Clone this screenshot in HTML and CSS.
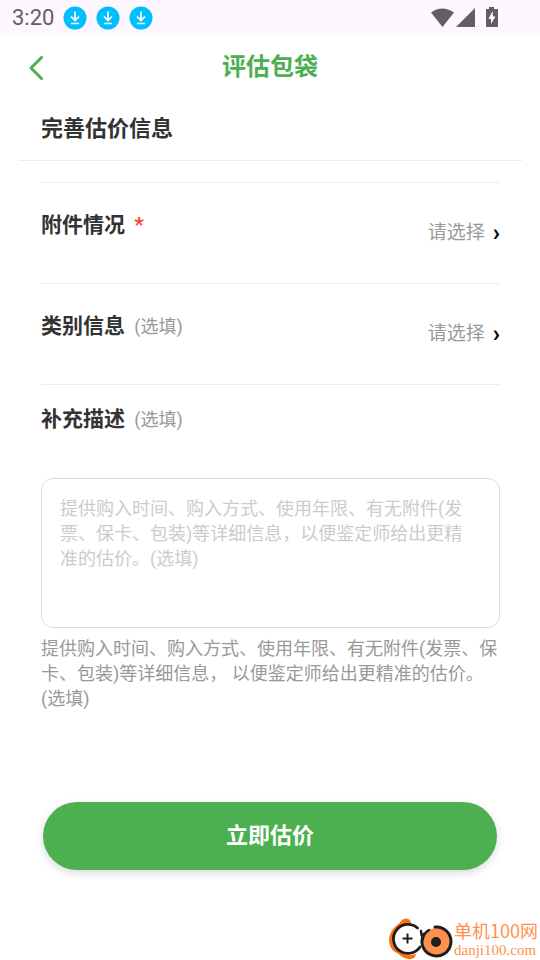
FILE: index.html
```html
<!DOCTYPE html>
<html lang="zh-CN">
<head>
<meta charset="utf-8">
<meta name="viewport" content="width=device-width, initial-scale=1">
<title>评估包袋</title>
<link rel="stylesheet" href="styles.css">
</head>
<body>
<svg class="sprite" aria-hidden="true">
  <symbol id="download" viewBox="0 0 24 24">
    <circle cx="12" cy="12" r="11.500" fill="#00bfff"/>
    <path d="M12 5.500v9M8 10.500l4 4 4-4M8 17.500h8" fill="none" stroke="#fff" stroke-width="1.700"/>
  </symbol>
</svg>
<div class="status">
  <span class="clock">3:20</span>
  <svg class="notice" aria-hidden="true"><use href="#download"/></svg>
  <svg class="notice" aria-hidden="true"><use href="#download"/></svg>
  <svg class="notice" aria-hidden="true"><use href="#download"/></svg>
  <svg class="system" viewBox="0 0 68 22" aria-hidden="true">
    <path d="M0 5.500Q11 -2.500 23 5.500L11.500 20Z"/>
    <path d="M25 20L44 1v19Z"/>
    <path fill-rule="evenodd" d="M58 0h5v2h3q1 0 1 1v16q0 1-1 1H56q-1 0-1-1V3q0-1 1-1h2ZM61.500 4L57.500 12h2.500v5L64.500 9.500h-2.500Z"/>
  </svg>
</div>
<header class="topbar">
  <button class="back" type="button" aria-label="返回">
    <svg viewBox="0 0 14 24" aria-hidden="true"><path d="M12.500 1.500L2 12l10.500 10.500"/></svg>
  </button>
  <h1>评估包袋</h1>
</header>
<main>
  <h2>完善估价信息</h2>
  <form>
    <div class="row">
      <span class="label" id="parts">附件情况 <span class="required">*</span></span>
      <button class="pick" type="button" aria-describedby="parts">请选择<span class="arrow">›</span></button>
    </div>
    <div class="row">
      <span class="label" id="kind">类别信息 <span class="optional">(选填)</span></span>
      <button class="pick" type="button" aria-describedby="kind">请选择<span class="arrow">›</span></button>
    </div>
    <div class="describe">
      <label class="label" for="detail">补充描述 <span class="optional">(选填)</span></label>
      <textarea id="detail" placeholder="提供购入时间、购入方式、使用年限、有无附件(发票、保卡、包装)等详细信息，以便鉴定师给出更精准的估价。(选填)"></textarea>
      <p>提供购入时间、购入方式、使用年限、有无附件(发票、保卡、包装)等详细信息， 以便鉴定师给出更精准的估价。(选填)</p>
    </div>
    <button class="submit" type="submit">立即估价</button>
  </form>
</main>
<aside class="mark">
  <svg viewBox="0 0 64 42" aria-hidden="true">
    <path d="M21 2Q17 -1 13 2Q11 5 7 8Q1 13 0 21Q0 30 6 34Q9 35 12 38Q19 43 25 40Q27 38 27 36Q18 39 11 34Q3 28 4 20Q5 9 15 6Q19 6 22 5Z" fill="#ff6f0f"/>
    <circle cx="19" cy="21" r="14.500" fill="#fff"/>
    <path d="M28.500 10A14.500 14.500 0 1 0 31 29" fill="none" stroke="#211c1d" stroke-width="2.800" stroke-linecap="round"/>
    <path d="M18.500 15.500v10M13.500 20.500h10" stroke="#211c1d" stroke-width="2"/>
    <circle cx="47.500" cy="23.500" r="13.500" fill="#ff914d"/>
    <path d="M46 9A14.500 14.500 0 1 1 35 16" fill="none" stroke="#211c1d" stroke-width="3" stroke-linecap="round"/>
    <path d="M32 13q0 4 2 7q1-5 6-8" fill="none" stroke="#211c1d" stroke-width="2.500" stroke-linecap="round"/>
    <circle cx="47" cy="24" r="5" fill="#211c1d"/>
  </svg>
  <div class="site"><b>单机100网</b><span>danji100.com</span></div>
</aside>
</body>
</html>
```
FILE: styles.css
```css
* {
  box-sizing: border-box;
}

body {
  margin: 0;
  min-height: 100vh;
  display: flex;
  flex-direction: column;
  background: #fff;
  color: #333;
  font-family: Roboto, "Noto Sans CJK SC", sans-serif;
}

button,
textarea {
  font-family: inherit;
}

h1,
h2,
p {
  margin: 0;
}

.sprite {
  position: absolute;
  width: 0;
  height: 0;
}

.status {
  display: flex;
  align-items: center;
  gap: 9px;
  height: 36px;
  padding: 0 41px 0 12px;
  background: #fef7ff;
}

.clock {
  color: #625f64;
  font-size: 22px;
  line-height: 36px;
}

.notice {
  width: 24px;
  height: 24px;
}

.system {
  width: 68px;
  height: 22px;
  margin-left: auto;
  fill: #625f64;
}

.topbar {
  display: grid;
  grid-template-columns: 48px 1fr 48px;
  align-items: center;
  height: 62px;
  padding: 0 12px;
}

.topbar h1 {
  color: #4caf50;
  font-size: 24px;
  font-weight: 700;
  line-height: 36px;
  text-align: center;
}

.back {
  height: 48px;
  padding: 2px 0 0;
  border: 0;
  background: none;
}

.back svg {
  display: block;
  width: 14px;
  height: 24px;
  margin: 0 auto;
  fill: none;
  stroke: #4caf50;
  stroke-width: 3;
  stroke-linecap: round;
  stroke-linejoin: round;
}

main {
  padding: 0 18px;
}

h2 {
  padding: 14px 23px;
  border-bottom: 1px solid #ececec;
  font-size: 22px;
  font-weight: 700;
  line-height: 34px;
}

form {
  padding: 21px 22px 0 23px;
}

.row {
  display: flex;
  justify-content: space-between;
  height: 101px;
  padding-top: 26px;
  border-top: 1px solid #ececec;
}

.label {
  font-size: 21px;
  font-weight: 700;
  line-height: 32px;
}

.required {
  margin-left: 4px;
  color: #f44336;
}

.optional {
  margin-left: 4px;
  color: #999;
  font-size: 18px;
  font-weight: 400;
}

.pick {
  display: flex;
  gap: 8px;
  align-self: flex-start;
  padding: 8px 0;
  border: 0;
  background: none;
  color: #999;
  font-size: 19px;
  line-height: 32px;
}

.arrow {
  color: #000;
  font-size: 24px;
  font-weight: 700;
}

.describe {
  padding-top: 18px;
  border-top: 1px solid #ececec;
}

.describe .label {
  display: block;
}

textarea {
  display: block;
  width: 100%;
  height: 150px;
  margin-top: 42px;
  padding: 17px 30px 17px 18px;
  border: 1px solid #ddd;
  border-radius: 12px;
  background: #fff;
  font-size: 18px;
  line-height: 25px;
  resize: none;
}

textarea::placeholder {
  color: #ccc;
}

.describe p {
  padding-top: 8px;
  color: #999;
  font-size: 18px;
  line-height: 25px;
}

.submit {
  display: block;
  width: calc(100% - 5px);
  height: 68px;
  margin: 91px 3px 0 2px;
  padding-bottom: 8px;
  border: 0;
  border-radius: 34px;
  background: #4caf50;
  box-shadow: 0 3px 8px rgb(0 0 0 / 15%);
  color: #fff;
  font-size: 22px;
  font-weight: 700;
}

.mark {
  display: flex;
  align-items: center;
  gap: 1px;
  margin: auto 2px 0 auto;
  color: #ff914d;
}

.mark svg {
  width: 64px;
  height: 42px;
}

.site {
  display: grid;
  font-family: "Liberation Serif", "Noto Sans CJK SC", serif;
}

.site b {
  font-family: "Noto Sans CJK SC", sans-serif;
  font-size: 18px;
  font-weight: 400;
  line-height: 22px;
}

.site span {
  font-size: 15px;
  line-height: 18px;
}
```
